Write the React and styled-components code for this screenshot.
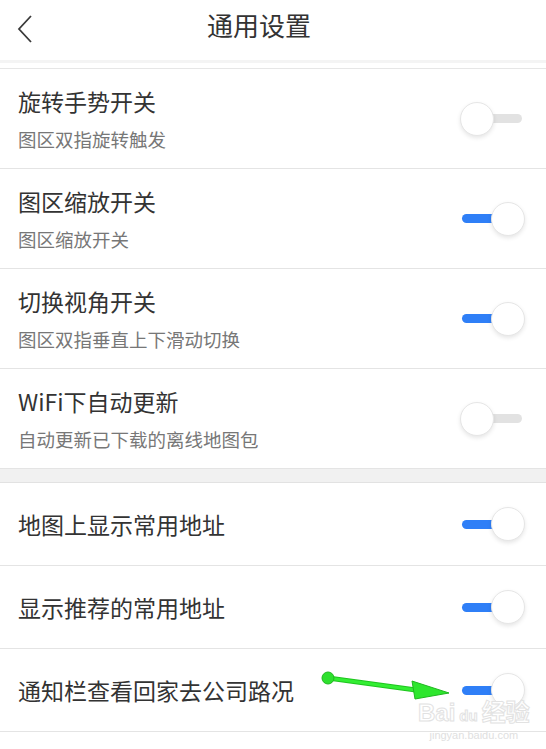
import React from 'react'
import styled, { createGlobalStyle } from 'styled-components'

const Global = createGlobalStyle`
body {
    margin: 0;
    background: #fff;
    font-family: "Noto Sans CJK SC", "Noto Sans", sans-serif;
}
`

const settingsA = [
    { title: '旋转手势开关', sub: '图区双指旋转触发', on: false },
    { title: '图区缩放开关', sub: '图区缩放开关', on: true },
    { title: '切换视角开关', sub: '图区双指垂直上下滑动切换', on: true },
    { title: 'WiFi下自动更新', sub: '自动更新已下载的离线地图包', on: false },
]

const settingsB = [
    { title: '地图上显示常用地址', on: true },
    { title: '显示推荐的常用地址', on: true },
    { title: '通知栏查看回家去公司路况', on: true },
]

const App = () => {
    return (
        <Page>
            <Global />
            <Header>
                <Back>
                    <svg width="16" height="28" viewBox="0 0 16 28">
                        <path d="M14 1 L2 14 L14 27" fill="none" stroke="#3a3a3a" strokeWidth="1.8" />
                    </svg>
                </Back>
                <Title>通用设置</Title>
            </Header>
            <Strip />
            <Group>
                {settingsA.map((s) => (
                    <Row key={s.title} $tall>
                        <Texts>
                            <Name>{s.title}</Name>
                            <Sub>{s.sub}</Sub>
                        </Texts>
                        <Switch $on={s.on}>
                            <Knob $on={s.on} />
                        </Switch>
                    </Row>
                ))}
            </Group>
            <Band />
            <Group>
                {settingsB.map((s) => (
                    <Row key={s.title}>
                        <Texts>
                            <Name>{s.title}</Name>
                        </Texts>
                        <Switch $on={s.on}>
                            <Knob $on={s.on} />
                        </Switch>
                    </Row>
                ))}
            </Group>
            <Arrow width="546" height="749" viewBox="0 0 546 749">
                <path d="M328 678 L416 690" stroke="#1fc51f" strokeWidth="5" strokeLinecap="round" />
                <path d="M328 678 L416 690" stroke="#33ee33" strokeWidth="3" strokeLinecap="round" />
                <circle cx="328" cy="678" r="6" fill="#2ee02e" stroke="#1fb81f" strokeWidth="1" />
                <polygon points="412,681 449,693 415,699" fill="#2ee62e" stroke="#1fb81f" strokeWidth="1" />
            </Arrow>
            <Mark>
                <span>Bai<Paw>du</Paw>经验</span>
                <small>jingyan.baidu.com</small>
            </Mark>
        </Page>
    )
}

const Page = styled.div`
position: relative;
width: 546px;
min-height: 749px;
background: #fff;
overflow: hidden;
`
const Header = styled.div`
height: 60px;
display: flex;
align-items: center;
`
const Back = styled.div`
width: 60px;
padding-left: 17px;
box-sizing: border-box;
display: flex;
align-items: center;
margin-top: -2px;
`
const Title = styled.div`
flex: 1;
text-align: center;
padding-right: 88px;
font-size: 26px;
color: #333;
margin-top: -12px;
`
const Strip = styled.div`
height: 5px;
border-top: 3px solid #f4f4f4;
border-bottom: 1px solid #e6e6e6;
`
const Group = styled.div`
display: flex;
flex-direction: column;
`
const Row = styled.div`
height: ${(p) => (p.$tall ? '99px' : '82px')};
border-bottom: 1px solid #e4e4e4;
display: flex;
align-items: center;
justify-content: space-between;
padding: 0 22px 0 18px;
`
const Texts = styled.div`
display: flex;
flex-direction: column;
gap: 9px;
`
const Name = styled.div`
font-size: 23px;
line-height: 32px;
color: #333;
`
const Sub = styled.div`
font-size: 18.5px;
line-height: 26px;
color: #777;
`
const Band = styled.div`
height: 13px;
background: #f1f1f1;
border-bottom: 1px solid #e2e2e2;
`
const Switch = styled.div`
position: relative;
width: 64px;
height: 34px;
display: flex;
align-items: center;
&::before{
    content: '';
    display: block;
    margin-left: 2px;
    width: 60px;
    height: 9px;
    border-radius: 5px;
    background: ${(p) => (p.$on ? '#2f7ff7' : '#e2e2e2')};
}
`
const Knob = styled.div`
position: absolute;
top: 0;
left: ${(p) => (p.$on ? '31px' : '0')};
width: 32px;
height: 32px;
border-radius: 50%;
background: #fff;
border: 1px solid #e6e6e6;
box-shadow: 0 2px 4px rgba(0, 0, 0, 0.1);
`
const Arrow = styled.svg`
position: absolute;
left: 0;
top: 0;
pointer-events: none;
`
const Mark = styled.div`
position: absolute;
left: 418px;
top: 700px;
display: flex;
flex-direction: column;
align-items: center;
color: rgba(255, 255, 255, 0.9);
font-family: "Liberation Sans", "Noto Sans CJK SC", sans-serif;
& span{
    font-size: 24px;
    font-weight: bold;
    line-height: 26px;
    -webkit-text-stroke: 1px #e2e2e2;
}
& small{
    font-size: 11px;
    color: #e0e0e0;
    line-height: 12px;
}
`
const Paw = styled.b`
font-size: 15px;
margin: 0 4px;
`

export default App
